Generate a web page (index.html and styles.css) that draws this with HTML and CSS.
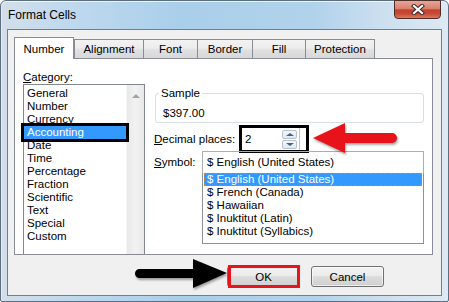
FILE: index.html
```html
<!DOCTYPE html>
<html lang="en">
<head>
    <meta charset="UTF-8">
    <title>Format Cells</title>
    <link rel="stylesheet" href="styles.css">
</head>
<body>
    <div class="window">
        <div class="titlebar">
            <span class="title">Format Cells</span>
            <button class="close">
                <svg width="14" height="11" viewBox="0 0 14 11">
                    <path d="M3 2 L11 9 M11 2 L3 9" stroke="#3a2a2a" stroke-width="4.2" stroke-linecap="square"/>
                    <path d="M3 2 L11 9 M11 2 L3 9" stroke="#fff" stroke-width="2.2" stroke-linecap="square"/>
                </svg>
            </button>
        </div>

        <div class="client">
            <div class="tabs">
                <div class="tab active" style="width: 60px">Number</div>
                <div class="tab" style="width: 70px">Alignment</div>
                <div class="tab" style="width: 54px">Font</div>
                <div class="tab" style="width: 55px">Border</div>
                <div class="tab" style="width: 53px">Fill</div>
                <div class="tab" style="width: 69px">Protection</div>
            </div>

            <div class="panel">
                <div class="category">
                    <div class="cat-label"><u>C</u>ategory:</div>
                    <div class="listbox">
                        <ul class="items">
                            <li>General</li>
                            <li>Number</li>
                            <li>Currency</li>
                            <li class="selected">Accounting</li>
                            <li>Date</li>
                            <li>Time</li>
                            <li>Percentage</li>
                            <li>Fraction</li>
                            <li>Scientific</li>
                            <li>Text</li>
                            <li>Special</li>
                            <li>Custom</li>
                        </ul>
                        <div class="scrollbar"><span class="scroll-up"></span></div>
                    </div>
                </div>

                <div class="settings">
                    <fieldset class="sample">
                        <legend>Sample</legend>
                        <div class="sample-value">$397.00</div>
                    </fieldset>

                    <div class="row decimals">
                        <label class="row-label"><u>D</u>ecimal places:</label>
                        <div class="spin">
                            <div class="spin-field">
                                <span>2</span>
                                <div class="spin-btns">
                                    <span class="spin-btn up"></span>
                                    <span class="spin-btn down"></span>
                                </div>
                            </div>
                        </div>
                    </div>

                    <div class="row symbol">
                        <label class="row-label symbol-label"><u>S</u>ymbol:</label>
                        <div class="combo">
                            <div class="combo-value">$ English (United States)</div>
                            <ul class="dropdown">
                                <li class="selected">$ English (United States)</li>
                                <li>$ French (Canada)</li>
                                <li>$ Hawaiian</li>
                                <li>$ Inuktitut (Latin)</li>
                                <li>$ Inuktitut (Syllabics)</li>
                            </ul>
                        </div>
                    </div>
                </div>
            </div>

            <div class="buttons">
                <button class="btn ok">OK</button>
                <button class="btn">Cancel</button>
            </div>
        </div>

        <!-- annotation arrows drawn over the dialog -->
        <svg class="arrow arrow-red" width="92" height="40" viewBox="0 0 92 40">
            <path d="M3 18 L35 3 L35 13 L82 13 A5 5 0 0 1 82 23 L35 23 L35 33 Z" fill="#e8121a"/>
        </svg>
        <svg class="arrow arrow-black" width="98" height="36" viewBox="0 0 98 36">
            <path d="M95 17 L61 3 L61 13 L7.5 13 A4.5 4.5 0 0 0 7.5 22 L61 22 L61 32 Z" fill="#000"/>
        </svg>
    </div>
</body>
</html>
```

FILE: styles.css
```css
* {
    box-sizing: border-box;
}
body {
    margin: 0;
    font-family: "Liberation Sans", Arial, sans-serif;
    font-size: 11.5px;
    color: #000;
    background: #fff;
}
.window {
    position: relative;
    width: 449px;
    height: 302px;
    border: 1px solid #5d6e80;
    border-radius: 6px 6px 2px 2px;
    background: linear-gradient(90deg, #d3dfe9 0%, #c0d9ee 14%, #aacfea 40%, #b1d2eb 70%, #cde0f0 86%, #dde9f3 100%);
    box-shadow: inset 0 1px 0 rgba(255, 255, 255, 0.7), inset 1px 0 0 rgba(255, 255, 255, 0.4);
}
.titlebar {
    display: flex;
    align-items: flex-start;
    height: 28px;
    padding: 0 7px;
}
.title {
    margin-top: 7px;
    font-size: 12px;
    line-height: 15px;
}
.close {
    margin-left: auto;
    margin-top: -1px;
    width: 47px;
    height: 19px;
    padding: 0;
    border: 1px solid #4b2d2a;
    border-radius: 0 0 4px 4px;
    background: linear-gradient(#e8a597 0%, #d9806f 45%, #c3422d 52%, #c84a33 75%, #dd785b 100%);
    display: flex;
    align-items: center;
    justify-content: center;
}
.client {
    margin: 0 6px;
    height: 267px;
    border: 1px solid #6f7f8f;
    background: #f0f0f0;
}
.tabs {
    display: flex;
    align-items: flex-end;
    height: 21px;
    margin: 7px 0 0 6px;
}
.tab {
    height: 19px;
    border: 1px solid #898c95;
    border-bottom: none;
    border-left-width: 0;
    background: linear-gradient(#f3f3f3, #ececec 45%, #e0e0e0 55%, #d8d8d8);
    line-height: 19px;
    text-align: center;
}
.tab:first-child,
.tab.active + .tab {
    border-left-width: 1px;
}
.tab.active {
    position: relative;
    height: 22px;
    margin-bottom: -1px;
    padding-top: 1px;
    line-height: 21px;
    background: #fff;
}
.panel {
    display: flex;
    width: 419px;
    height: 197px;
    margin-left: 6px;
    border: 1px solid #898c95;
    background: #fff;
    overflow: hidden;
}
.category {
    padding: 10px 0 0 8px;
}
.cat-label {
    line-height: 16px;
}
.listbox {
    display: flex;
    width: 122px;
    height: 175px;
    margin-top: -1px;
    border: 1px solid #828790;
}
.items {
    list-style: none;
    margin: 0;
    padding: 2px 0 0;
    width: 102px;
}
.items li {
    line-height: 13px;
    padding-left: 3px;
    white-space: nowrap;
}
.items li.selected {
    position: relative;
    background: #3399ff;
    color: #fff;
    outline: 3px solid #000;
}
.scrollbar {
    width: 18px;
    background: linear-gradient(90deg, #e8e8e8, #f2f2f2 50%, #e8e8e8);
    border-left: 1px solid #f7f7f7;
    display: flex;
    justify-content: center;
    padding-top: 9px;
}
.scroll-up {
    width: 0;
    height: 0;
    border-left: 4px solid transparent;
    border-right: 4px solid transparent;
    border-bottom: 4px solid #a3a3a3;
}
.settings {
    padding: 27px 0 0 9px;
}
.sample {
    width: 269px;
    margin: 0 0 0 1px;
    padding: 0 7px 1px 3px;
    border: 1px solid #d5dfe5;
    border-radius: 3px;
}
.sample legend {
    padding: 0 2px;
    line-height: 15px;
}
.sample-value {
    padding-left: 4px;
    margin-top: 5px;
    line-height: 15px;
}
.row {
    display: flex;
}
.decimals {
    align-items: center;
    margin-top: 5px;
}
.decimals .row-label {
    width: 88px;
}
.spin {
    width: 64px;
    height: 22px;
    background: #fff;
    outline: 3px solid #000;
}
.spin-field {
    display: flex;
    align-items: center;
    justify-content: space-between;
    width: 58px;
    height: 100%;
    padding: 0 2px 0 3px;
    border-right: 1px solid #c3c3c3;
}
.spin-btns {
    display: flex;
    flex-direction: column;
    gap: 1px;
}
.spin-btn {
    position: relative;
    width: 15px;
    height: 9px;
    border: 1px solid #b4c2d1;
    border-radius: 2px;
    background: linear-gradient(#f4f7fb, #dfe8f1);
}
.spin-btn::after {
    content: "";
    position: absolute;
    left: 3px;
    top: 2px;
    border-left: 4px solid transparent;
    border-right: 4px solid transparent;
}
.spin-btn.up::after {
    border-bottom: 3px solid #4a5f7e;
}
.spin-btn.down::after {
    border-top: 3px solid #4a5f7e;
}
.symbol {
    align-items: flex-start;
    margin-top: 1px;
}
.symbol-label {
    width: 48px;
    padding-top: 4px;
    line-height: 15px;
}
.combo {
    width: 222px;
}
.combo-value {
    height: 22px;
    padding-left: 4px;
    border: 1px solid #abadb3;
    border-bottom: none;
    line-height: 21px;
}
.dropdown {
    list-style: none;
    margin: 0;
    height: 71px;
    padding: 0 1px;
    border: 1px solid #8e9199;
    border-top: none;
}
.dropdown li {
    line-height: 13px;
    padding-left: 3px;
    white-space: nowrap;
}
.dropdown li.selected {
    background: #3399ff;
    color: #fff;
    outline: 1px dashed #c8833c;
    outline-offset: -1px;
}
.buttons {
    display: flex;
    justify-content: flex-end;
    gap: 11px;
    margin-top: 11px;
    padding-right: 57px;
}
.btn {
    width: 73px;
    height: 21px;
    padding: 0;
    border: 1px solid #707070;
    border-radius: 3px;
    background: linear-gradient(#f2f2f2, #ebebeb 49%, #dddddd 50%, #cfcfcf);
    box-shadow: inset 0 0 0 1px rgba(255, 255, 255, 0.6);
    font: inherit;
    color: #000;
}
.btn.ok {
    position: relative;
    border-color: #3c7fb1;
}
.btn.ok::after {
    content: "";
    position: absolute;
    top: -2px;
    bottom: -2px;
    left: 0;
    right: -1px;
    border: 3px solid #e8141b;
}
.arrow {
    position: absolute;
    filter: drop-shadow(1px 2px 1px rgba(0, 0, 0, 0.35));
}
.arrow-red {
    left: 309px;
    top: 119px;
}
.arrow-black {
    left: 131px;
    top: 255px;
}
```
